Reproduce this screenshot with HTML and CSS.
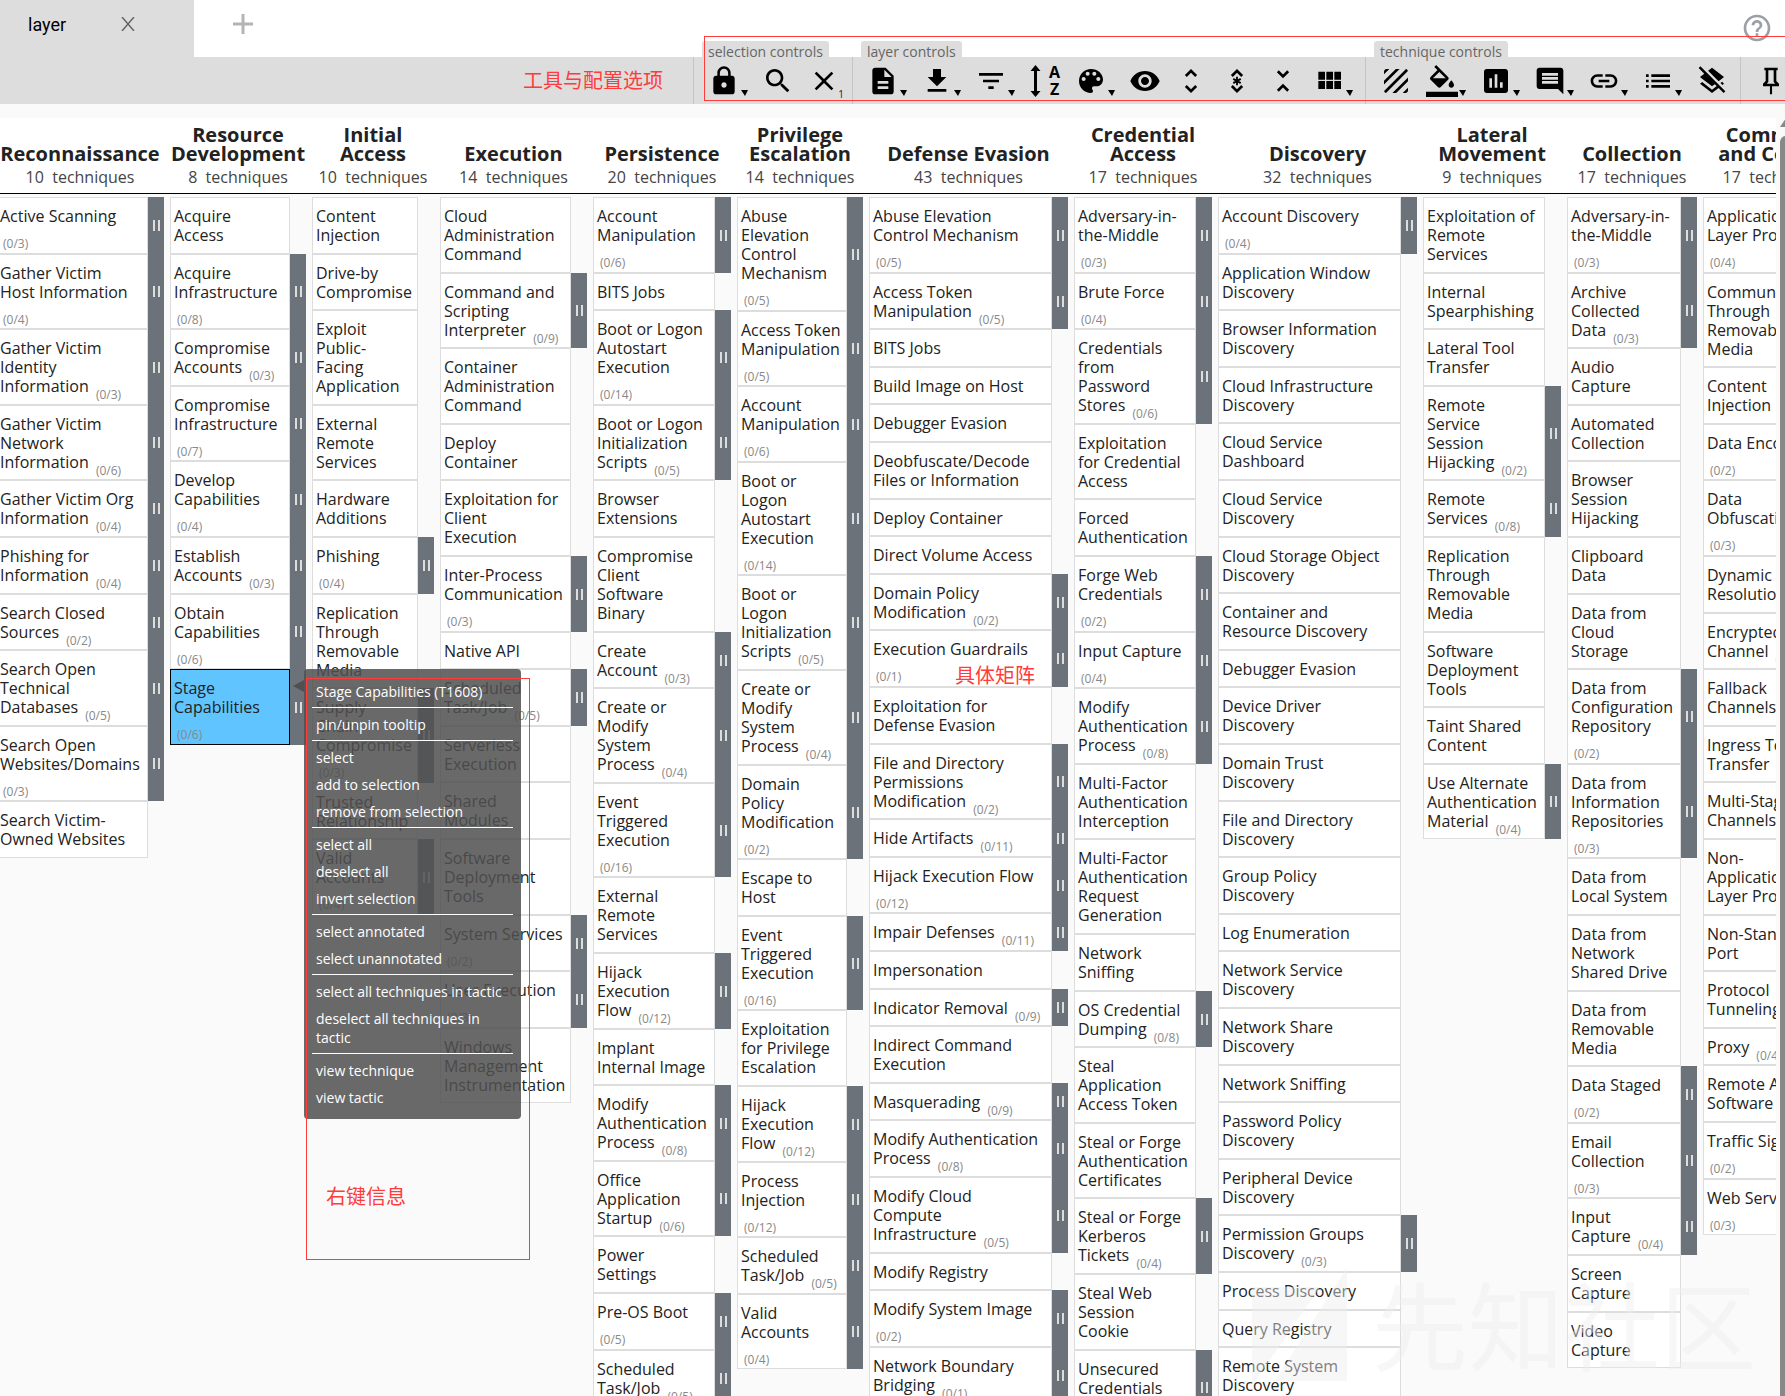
FILE: index.html
```html
<!DOCTYPE html>
<html lang="en">
<head>
<meta charset="utf-8">
<title>layer</title>
<link rel="stylesheet" href="styles.css">
</head>
<body>
<nav class="tabs">
  <div class="tab"><a href="#">layer</a><button class="tab-close" aria-label="Close tab"><svg width="14" height="14" viewBox="0 0 14 14"><path d="M1 0l12 14M13 0L1 14" stroke="#666" stroke-width="1.5" fill="none"/></svg></button></div>
  <button class="tab-add" aria-label="New tab"><svg width="20" height="20" viewBox="0 0 20 20"><path d="M10 0v20M0 10h20" stroke="#b4b4b4" stroke-width="3" fill="none"/></svg></button>
  <button class="help" aria-label="Help"><svg viewBox="0 0 24 24"><path d="M11 18h2v-2h-2v2zm1-16C6.48 2 2 6.48 2 12s4.48 10 10 10 10-4.48 10-10S17.52 2 12 2zm0 18c-4.41 0-8-3.59-8-8s3.59-8 8-8 8 3.59 8 8-3.59 8-8 8zm0-14c-2.21 0-4 1.79-4 4h2c0-1.1.9-2 2-2s2 .9 2 2c0 2-3 1.75-3 5h2c0-2.25 3-2.5 3-5 0-2.21-1.79-4-4-4z"/></svg></button>
</nav>
<div class="toolbar">
  <span class="toolbar-note">工具与配置选项</span>
  <div class="group">
    <span class="label">selection controls</span>
    <button class="menu" aria-label="Lock"><svg viewBox="0 0 24 24"><path d="M18 8h-1V6c0-2.76-2.24-5-5-5S7 3.24 7 6v2H6c-1.1 0-2 .9-2 2v10c0 1.1.9 2 2 2h12c1.1 0 2-.9 2-2V10c0-1.1-.9-2-2-2zm-6 9c-1.1 0-2-.9-2-2s.9-2 2-2 2 .9 2 2-.9 2-2 2zm3.1-9H8.9V6c0-1.71 1.39-3.1 3.1-3.1 1.71 0 3.1 1.39 3.1 3.1v2z"/></svg></button>
    <button aria-label="Search"><svg viewBox="0 0 24 24"><path d="M15.5 14h-.79l-.28-.27C15.41 12.59 16 11.11 16 9.5 16 5.91 13.09 3 9.5 3S3 5.91 3 9.5 5.91 16 9.5 16c1.61 0 3.09-.59 4.23-1.57l.27.28v.79l5 4.99L20.49 19l-4.99-5zm-6 0C7.01 14 5 11.99 5 9.5S7.01 5 9.5 5 14 7.01 14 9.5 11.99 14 9.5 14z"/></svg></button>
    <button aria-label="Deselect"><svg viewBox="0 0 24 24"><path d="M19 6.41L17.59 5 12 10.59 6.41 5 5 6.41 10.59 12 5 17.59 6.41 19 12 13.41 17.59 19 19 17.59 13.41 12z"/></svg><span class="badge">1</span></button>
  </div>
  <div class="group">
    <span class="label">layer controls</span>
    <button class="menu" aria-label="Layer information"><svg viewBox="0 0 24 24"><path d="M14 2H6c-1.1 0-1.99.9-1.99 2L4 20c0 1.1.89 2 1.99 2H18c1.1 0 2-.9 2-2V8l-6-6zm2 16H8v-2h8v2zm0-4H8v-2h8v2zm-3-5V3.5L18.5 9H13z"/></svg></button>
    <button class="menu" aria-label="Export"><svg viewBox="0 0 24 24"><path d="M19 9h-4V3H9v6H5l7 7 7-7zM5 18v2h14v-2H5z"/></svg></button>
    <button class="menu" aria-label="Filters"><svg viewBox="0 0 24 24"><path d="M10 18h4v-2h-4v2zM3 6v2h18V6H3zm3 7h12v-2H6v2z"/></svg></button>
    <button aria-label="Sorting"><svg viewBox="0 0 32 32"><path d="M6.500 0l5 6H8v20h3.500l-5 6-5-6H5V6H1.500z"/><text x="20" y="13" font-size="16">A</text><text x="21" y="30" font-size="16">Z</text></svg></button>
    <button class="menu" aria-label="Color setup"><svg viewBox="0 0 24 24"><path d="M12 3c-4.970 0-9 4.030-9 9s4.030 9 9 9c.83 0 1.500-.67 1.500-1.500 0-.39-.15-.74-.39-1.010-.23-.26-.38-.61-.38-.99 0-.83.67-1.500 1.500-1.500H16c2.760 0 5-2.240 5-5 0-4.420-4.030-8-9-8zm-5.500 9c-.83 0-1.500-.67-1.500-1.500S5.670 9 6.500 9 8 9.670 8 10.500 7.330 12 6.500 12zm3-4C8.670 8 8 7.330 8 6.500S8.670 5 9.500 5s1.500.67 1.500 1.500S10.330 8 9.500 8zm5 0c-.83 0-1.500-.67-1.500-1.500S13.670 5 14.500 5s1.500.67 1.500 1.500S15.330 8 14.500 8zm3 4c-.83 0-1.500-.67-1.500-1.500S16.670 9 17.500 9s1.500.67 1.500 1.500-.67 1.500-1.500 1.500z"/></svg></button>
    <button aria-label="Show or hide disabled"><svg viewBox="0 0 24 24"><path d="M12 4.500C7 4.500 2.730 7.610 1 12c1.730 4.390 6 7.500 11 7.500s9.270-3.110 11-7.500c-1.730-4.390-6-7.500-11-7.500zM12 17c-2.760 0-5-2.240-5-5s2.240-5 5-5 5 2.240 5 5-2.240 5-5 5zm0-8c-1.660 0-3 1.340-3 3s1.340 3 3 3 3-1.340 3-3-1.340-3-3-3z"/></svg></button>
    <button aria-label="Expand sub-techniques"><svg viewBox="0 0 24 24"><path d="M12 5.830L15.170 9l1.410-1.410L12 3 7.410 7.590 8.830 9 12 5.830zm0 12.340L8.830 15l-1.410 1.410L12 21l4.590-4.590L15.170 15 12 18.170z"/></svg></button>
    <button aria-label="Expand annotated sub-techniques"><svg viewBox="0 0 24 24"><path d="M12 5.830L15.170 9l1.410-1.410L12 3 7.410 7.590 8.830 9 12 5.830zm0 12.340L8.830 15l-1.410 1.410L12 21l4.590-4.590L15.170 15 12 18.170z"/><path d="M12 8.800v6.400M9.200 10.400l5.600 3.200M14.800 10.400l-5.600 3.200" stroke="#000" stroke-width="1.400"/></svg></button>
    <button aria-label="Collapse sub-techniques"><svg viewBox="0 0 24 24"><path d="M7.410 18.590L8.830 20 12 16.830 15.170 20l1.410-1.410L12 14l-4.590 4.590zm9.180-13.180L15.170 4 12 7.170 8.830 4 7.410 5.410 12 10l4.590-4.590z"/></svg></button>
    <button class="menu" aria-label="Matrix configuration"><svg viewBox="0 0 24 24"><path d="M4 11h5V5H4v6zm0 7h5v-6H4v6zm6 0h5v-6h-5v6zm6 0h5v-6h-5v6zm-6-7h5V5h-5v6zm6-6v6h5V5h-5z"/></svg></button>
  </div>
  <div class="group">
    <span class="label">technique controls</span>
    <button aria-label="Toggle state"><svg viewBox="0 0 24 24"><path d="M19.510 3.080L3.080 19.510c.09.34.27.65.51.9.25.24.56.42.9.51L20.930 4.490c-.19-.69-.73-1.230-1.420-1.410zM11.880 3L3 11.880v2.830L14.710 3h-2.830zM5 3c-1.100 0-2 .9-2 2v2l4-4H5zm14 18c.55 0 1.050-.22 1.410-.59.37-.36.59-.86.59-1.410v-2l-4 4h2zm-9.710 0h2.830L21 12.120V9.290L9.290 21z"/></svg></button>
    <button class="menu" aria-label="Background color"><svg viewBox="0 0 24 24"><path d="M16.560 8.940L7.620 0 6.210 1.410l2.380 2.380-5.150 5.150c-.59.59-.59 1.540 0 2.120l5.500 5.500c.29.29.68.44 1.060.44s.77-.15 1.060-.44l5.500-5.500c.59-.58.59-1.530 0-2.120zM5.210 10L10 5.210 14.790 10H5.210zM19 11.500s-2 2.170-2 3.500c0 1.100.9 2 2 2s2-.9 2-2c0-1.330-2-3.500-2-3.500zM0 20h24v4H0z"/></svg></button>
    <button class="menu" aria-label="Scoring"><svg viewBox="0 0 24 24"><path d="M19 3H5c-1.100 0-2 .9-2 2v14c0 1.100.9 2 2 2h14c1.100 0 2-.9 2-2V5c0-1.100-.9-2-2-2zM9 17H7v-7h2v7zm4 0h-2V7h2v10zm4 0h-2v-4h2v4z"/></svg></button>
    <button class="menu" aria-label="Comment"><svg viewBox="0 0 24 24"><path d="M21.990 4c0-1.100-.89-2-1.990-2H4c-1.100 0-2 .9-2 2v12c0 1.100.9 2 2 2h14l4 4-.01-18zM18 14H6v-2h12v2zm0-3H6V9h12v2zm0-3H6V6h12v2z"/></svg></button>
    <button class="menu" aria-label="Link"><svg viewBox="0 0 24 24"><path d="M3.900 12c0-1.710 1.390-3.100 3.100-3.100h4V7H7c-2.760 0-5 2.240-5 5s2.240 5 5 5h4v-1.900H7c-1.710 0-3.100-1.390-3.100-3.100zM8 13h8v-2H8v2zm9-6h-4v1.900h4c1.710 0 3.100 1.390 3.100 3.100s-1.390 3.100-3.100 3.100h-4V17h4c2.760 0 5-2.240 5-5s-2.240-5-5-5z"/></svg></button>
    <button class="menu" aria-label="Metadata"><svg viewBox="0 0 24 24"><path d="M3 13h2v-2H3v2zm0 4h2v-2H3v2zm0-8h2V7H3v2zm4 4h14v-2H7v2zm0 4h14v-2H7v2zM7 7v2h14V7H7z"/></svg></button>
    <button aria-label="Clear annotations"><svg viewBox="0 0 24 24"><path d="M19.810 14.990l1.190-.92-1.430-1.430-1.190.92 1.430 1.430zm-.45-4.720L21 9l-9-7-2.910 2.270 7.870 7.880 2.400-1.880zM3.270 1L2 2.270l4.220 4.220L3 9l1.630 1.270L12 16l2.100-1.630 1.430 1.430L12 18.540l-7.370-5.730L3 14.070l9 7 4.950-3.850L20.730 21 22 19.730 3.270 1z"/></svg></button>
  </div>
  <div class="group group-last">
    <button aria-label="Pin toolbar"><svg viewBox="0 0 24 24"><path d="M16 12V4h1V2H7v2h1v8l-2 2v2h5.200v6h1.600v-6H18v-2l-2-2M8.800 14l1.200-1.200V4h4v8.800l1.200 1.200H8.800z"/></svg></button>
  </div>
  <div class="mark mark-toolbar"></div>
</div>
<main class="pane">
<div class="view">
<div class="tactics columns">
  <div><h2>Reconnaissance</h2><p>10&nbsp; techniques</p></div>
  <div><h2>Resource<br>Development</h2><p>8&nbsp; techniques</p></div>
  <div><h2>Initial<br>Access</h2><p>10&nbsp; techniques</p></div>
  <div><h2>Execution</h2><p>14&nbsp; techniques</p></div>
  <div><h2>Persistence</h2><p>20&nbsp; techniques</p></div>
  <div><h2>Privilege<br>Escalation</h2><p>14&nbsp; techniques</p></div>
  <div><h2>Defense Evasion</h2><p>43&nbsp; techniques</p></div>
  <div><h2>Credential<br>Access</h2><p>17&nbsp; techniques</p></div>
  <div><h2>Discovery</h2><p>32&nbsp; techniques</p></div>
  <div><h2>Lateral<br>Movement</h2><p>9&nbsp; techniques</p></div>
  <div><h2>Collection</h2><p>17&nbsp; techniques</p></div>
  <div><h2>Command<br>and Control</h2><p>17&nbsp; techniques</p></div>
</div>
<div class="matrix columns">
<ul>
<li><a href="#">Active Scanning<br><small>(0/3)</small></a><button aria-label="Expand"></button></li>
<li><a href="#">Gather Victim<br>Host Information<br><small>(0/4)</small></a><button aria-label="Expand"></button></li>
<li><a href="#">Gather Victim<br>Identity<br>Information <small>(0/3)</small></a><button aria-label="Expand"></button></li>
<li><a href="#">Gather Victim<br>Network<br>Information <small>(0/6)</small></a><button aria-label="Expand"></button></li>
<li><a href="#">Gather Victim Org<br>Information <small>(0/4)</small></a><button aria-label="Expand"></button></li>
<li><a href="#">Phishing for<br>Information <small>(0/4)</small></a><button aria-label="Expand"></button></li>
<li><a href="#">Search Closed<br>Sources <small>(0/2)</small></a><button aria-label="Expand"></button></li>
<li><a href="#">Search Open<br>Technical<br>Databases <small>(0/5)</small></a><button aria-label="Expand"></button></li>
<li><a href="#">Search Open<br>Websites/Domains<br><small>(0/3)</small></a><button aria-label="Expand"></button></li>
<li><a href="#">Search Victim-<br>Owned Websites</a></li>
</ul>
<ul>
<li><a href="#">Acquire<br>Access</a></li>
<li><a href="#">Acquire<br>Infrastructure<br><small>(0/8)</small></a><button aria-label="Expand"></button></li>
<li><a href="#">Compromise<br>Accounts <small>(0/3)</small></a><button aria-label="Expand"></button></li>
<li><a href="#">Compromise<br>Infrastructure<br><small>(0/7)</small></a><button aria-label="Expand"></button></li>
<li><a href="#">Develop<br>Capabilities<br><small>(0/4)</small></a><button aria-label="Expand"></button></li>
<li><a href="#">Establish<br>Accounts <small>(0/3)</small></a><button aria-label="Expand"></button></li>
<li><a href="#">Obtain<br>Capabilities<br><small>(0/6)</small></a><button aria-label="Expand"></button></li>
<li class="selected"><a href="#">Stage<br>Capabilities<br><small>(0/6)</small></a><button aria-label="Expand"></button>
  <div class="context">
    <button>Stage Capabilities (T1608)</button>
    <hr>
    <button>pin/unpin tooltip</button>
    <hr>
    <button>select</button>
    <button>add to selection</button>
    <button>remove from selection</button>
    <hr>
    <button>select all</button>
    <button>deselect all</button>
    <button>invert selection</button>
    <hr>
    <button>select annotated</button>
    <button>select unannotated</button>
    <hr>
    <button>select all techniques in tactic</button>
    <button>deselect all techniques in<br>tactic</button>
    <hr>
    <button>view technique</button>
    <button>view tactic</button>
  </div>
</li>
</ul>
<ul>
<li><a href="#">Content<br>Injection</a></li>
<li><a href="#">Drive-by<br>Compromise</a></li>
<li><a href="#">Exploit<br>Public-<br>Facing<br>Application</a></li>
<li><a href="#">External<br>Remote<br>Services</a></li>
<li><a href="#">Hardware<br>Additions</a></li>
<li><a href="#">Phishing<br><small>(0/4)</small></a><button aria-label="Expand"></button></li>
<li><a href="#">Replication<br>Through<br>Removable<br>Media</a></li>
<li><a href="#">Supply<br>Chain<br>Compromise<br><small>(0/3)</small></a><button aria-label="Expand"></button></li>
<li><a href="#">Trusted<br>Relationship</a></li>
<li><a href="#">Valid<br>Accounts<br><small>(0/4)</small></a><button aria-label="Expand"></button></li>
</ul>
<ul>
<li><a href="#">Cloud<br>Administration<br>Command</a></li>
<li><a href="#">Command and<br>Scripting<br>Interpreter <small>(0/9)</small></a><button aria-label="Expand"></button></li>
<li><a href="#">Container<br>Administration<br>Command</a></li>
<li><a href="#">Deploy<br>Container</a></li>
<li><a href="#">Exploitation for<br>Client<br>Execution</a></li>
<li><a href="#">Inter-Process<br>Communication<br><small>(0/3)</small></a><button aria-label="Expand"></button></li>
<li><a href="#">Native API</a></li>
<li><a href="#">Scheduled<br>Task/Job <small>(0/5)</small></a><button aria-label="Expand"></button></li>
<li><a href="#">Serverless<br>Execution</a></li>
<li><a href="#">Shared<br>Modules</a></li>
<li><a href="#">Software<br>Deployment<br>Tools</a></li>
<li><a href="#">System Services<br><small>(0/2)</small></a><button aria-label="Expand"></button></li>
<li><a href="#">User Execution<br><small>(0/3)</small></a><button aria-label="Expand"></button></li>
<li><a href="#">Windows<br>Management<br>Instrumentation</a></li>
</ul>
<ul>
<li><a href="#">Account<br>Manipulation<br><small>(0/6)</small></a><button aria-label="Expand"></button></li>
<li><a href="#">BITS Jobs</a></li>
<li><a href="#">Boot or Logon<br>Autostart<br>Execution<br><small>(0/14)</small></a><button aria-label="Expand"></button></li>
<li><a href="#">Boot or Logon<br>Initialization<br>Scripts <small>(0/5)</small></a><button aria-label="Expand"></button></li>
<li><a href="#">Browser<br>Extensions</a></li>
<li><a href="#">Compromise<br>Client<br>Software<br>Binary</a></li>
<li><a href="#">Create<br>Account <small>(0/3)</small></a><button aria-label="Expand"></button></li>
<li><a href="#">Create or<br>Modify<br>System<br>Process <small>(0/4)</small></a><button aria-label="Expand"></button></li>
<li><a href="#">Event<br>Triggered<br>Execution<br><small>(0/16)</small></a><button aria-label="Expand"></button></li>
<li><a href="#">External<br>Remote<br>Services</a></li>
<li><a href="#">Hijack<br>Execution<br>Flow <small>(0/12)</small></a><button aria-label="Expand"></button></li>
<li><a href="#">Implant<br>Internal Image</a></li>
<li><a href="#">Modify<br>Authentication<br>Process <small>(0/8)</small></a><button aria-label="Expand"></button></li>
<li><a href="#">Office<br>Application<br>Startup <small>(0/6)</small></a><button aria-label="Expand"></button></li>
<li><a href="#">Power<br>Settings</a></li>
<li><a href="#">Pre-OS Boot<br><small>(0/5)</small></a><button aria-label="Expand"></button></li>
<li><a href="#">Scheduled<br>Task/Job <small>(0/5)</small></a><button aria-label="Expand"></button></li>
</ul>
<ul>
<li><a href="#">Abuse<br>Elevation<br>Control<br>Mechanism<br><small>(0/5)</small></a><button aria-label="Expand"></button></li>
<li><a href="#">Access Token<br>Manipulation<br><small>(0/5)</small></a><button aria-label="Expand"></button></li>
<li><a href="#">Account<br>Manipulation<br><small>(0/6)</small></a><button aria-label="Expand"></button></li>
<li><a href="#">Boot or<br>Logon<br>Autostart<br>Execution<br><small>(0/14)</small></a><button aria-label="Expand"></button></li>
<li><a href="#">Boot or<br>Logon<br>Initialization<br>Scripts <small>(0/5)</small></a><button aria-label="Expand"></button></li>
<li><a href="#">Create or<br>Modify<br>System<br>Process <small>(0/4)</small></a><button aria-label="Expand"></button></li>
<li><a href="#">Domain<br>Policy<br>Modification<br><small>(0/2)</small></a><button aria-label="Expand"></button></li>
<li><a href="#">Escape to<br>Host</a></li>
<li><a href="#">Event<br>Triggered<br>Execution<br><small>(0/16)</small></a><button aria-label="Expand"></button></li>
<li><a href="#">Exploitation<br>for Privilege<br>Escalation</a></li>
<li><a href="#">Hijack<br>Execution<br>Flow <small>(0/12)</small></a><button aria-label="Expand"></button></li>
<li><a href="#">Process<br>Injection<br><small>(0/12)</small></a><button aria-label="Expand"></button></li>
<li><a href="#">Scheduled<br>Task/Job <small>(0/5)</small></a><button aria-label="Expand"></button></li>
<li><a href="#">Valid<br>Accounts<br><small>(0/4)</small></a><button aria-label="Expand"></button></li>
</ul>
<ul>
<li><a href="#">Abuse Elevation<br>Control Mechanism<br><small>(0/5)</small></a><button aria-label="Expand"></button></li>
<li><a href="#">Access Token<br>Manipulation <small>(0/5)</small></a><button aria-label="Expand"></button></li>
<li><a href="#">BITS Jobs</a></li>
<li><a href="#">Build Image on Host</a></li>
<li><a href="#">Debugger Evasion</a></li>
<li><a href="#">Deobfuscate/Decode<br>Files or Information</a></li>
<li><a href="#">Deploy Container</a></li>
<li><a href="#">Direct Volume Access</a></li>
<li><a href="#">Domain Policy<br>Modification <small>(0/2)</small></a><button aria-label="Expand"></button></li>
<li><a href="#">Execution Guardrails<br><small>(0/1)</small></a><button aria-label="Expand"></button></li>
<li><a href="#">Exploitation for<br>Defense Evasion</a></li>
<li><a href="#">File and Directory<br>Permissions<br>Modification <small>(0/2)</small></a><button aria-label="Expand"></button></li>
<li><a href="#">Hide Artifacts <small>(0/11)</small></a><button aria-label="Expand"></button></li>
<li><a href="#">Hijack Execution Flow<br><small>(0/12)</small></a><button aria-label="Expand"></button></li>
<li><a href="#">Impair Defenses <small>(0/11)</small></a><button aria-label="Expand"></button></li>
<li><a href="#">Impersonation</a></li>
<li><a href="#">Indicator Removal <small>(0/9)</small></a><button aria-label="Expand"></button></li>
<li><a href="#">Indirect Command<br>Execution</a></li>
<li><a href="#">Masquerading <small>(0/9)</small></a><button aria-label="Expand"></button></li>
<li><a href="#">Modify Authentication<br>Process <small>(0/8)</small></a><button aria-label="Expand"></button></li>
<li><a href="#">Modify Cloud<br>Compute<br>Infrastructure <small>(0/5)</small></a><button aria-label="Expand"></button></li>
<li><a href="#">Modify Registry</a></li>
<li><a href="#">Modify System Image<br><small>(0/2)</small></a><button aria-label="Expand"></button></li>
<li><a href="#">Network Boundary<br>Bridging <small>(0/1)</small></a><button aria-label="Expand"></button></li>
</ul>
<ul>
<li><a href="#">Adversary-in-<br>the-Middle<br><small>(0/3)</small></a><button aria-label="Expand"></button></li>
<li><a href="#">Brute Force<br><small>(0/4)</small></a><button aria-label="Expand"></button></li>
<li><a href="#">Credentials<br>from<br>Password<br>Stores <small>(0/6)</small></a><button aria-label="Expand"></button></li>
<li><a href="#">Exploitation<br>for Credential<br>Access</a></li>
<li><a href="#">Forced<br>Authentication</a></li>
<li><a href="#">Forge Web<br>Credentials<br><small>(0/2)</small></a><button aria-label="Expand"></button></li>
<li><a href="#">Input Capture<br><small>(0/4)</small></a><button aria-label="Expand"></button></li>
<li><a href="#">Modify<br>Authentication<br>Process <small>(0/8)</small></a><button aria-label="Expand"></button></li>
<li><a href="#">Multi-Factor<br>Authentication<br>Interception</a></li>
<li><a href="#">Multi-Factor<br>Authentication<br>Request<br>Generation</a></li>
<li><a href="#">Network<br>Sniffing</a></li>
<li><a href="#">OS Credential<br>Dumping <small>(0/8)</small></a><button aria-label="Expand"></button></li>
<li><a href="#">Steal<br>Application<br>Access Token</a></li>
<li><a href="#">Steal or Forge<br>Authentication<br>Certificates</a></li>
<li><a href="#">Steal or Forge<br>Kerberos<br>Tickets <small>(0/4)</small></a><button aria-label="Expand"></button></li>
<li><a href="#">Steal Web<br>Session<br>Cookie</a></li>
<li><a href="#">Unsecured<br>Credentials<br><small>(0/8)</small></a><button aria-label="Expand"></button></li>
</ul>
<ul>
<li><a href="#">Account Discovery<br><small>(0/4)</small></a><button aria-label="Expand"></button></li>
<li><a href="#">Application Window<br>Discovery</a></li>
<li><a href="#">Browser Information<br>Discovery</a></li>
<li><a href="#">Cloud Infrastructure<br>Discovery</a></li>
<li><a href="#">Cloud Service<br>Dashboard</a></li>
<li><a href="#">Cloud Service<br>Discovery</a></li>
<li><a href="#">Cloud Storage Object<br>Discovery</a></li>
<li><a href="#">Container and<br>Resource Discovery</a></li>
<li><a href="#">Debugger Evasion</a></li>
<li><a href="#">Device Driver<br>Discovery</a></li>
<li><a href="#">Domain Trust<br>Discovery</a></li>
<li><a href="#">File and Directory<br>Discovery</a></li>
<li><a href="#">Group Policy<br>Discovery</a></li>
<li><a href="#">Log Enumeration</a></li>
<li><a href="#">Network Service<br>Discovery</a></li>
<li><a href="#">Network Share<br>Discovery</a></li>
<li><a href="#">Network Sniffing</a></li>
<li><a href="#">Password Policy<br>Discovery</a></li>
<li><a href="#">Peripheral Device<br>Discovery</a></li>
<li><a href="#">Permission Groups<br>Discovery <small>(0/3)</small></a><button aria-label="Expand"></button></li>
<li><a href="#">Process Discovery</a></li>
<li><a href="#">Query Registry</a></li>
<li><a href="#">Remote System<br>Discovery</a></li>
</ul>
<ul>
<li><a href="#">Exploitation of<br>Remote<br>Services</a></li>
<li><a href="#">Internal<br>Spearphishing</a></li>
<li><a href="#">Lateral Tool<br>Transfer</a></li>
<li><a href="#">Remote<br>Service<br>Session<br>Hijacking <small>(0/2)</small></a><button aria-label="Expand"></button></li>
<li><a href="#">Remote<br>Services <small>(0/8)</small></a><button aria-label="Expand"></button></li>
<li><a href="#">Replication<br>Through<br>Removable<br>Media</a></li>
<li><a href="#">Software<br>Deployment<br>Tools</a></li>
<li><a href="#">Taint Shared<br>Content</a></li>
<li><a href="#">Use Alternate<br>Authentication<br>Material <small>(0/4)</small></a><button aria-label="Expand"></button></li>
</ul>
<ul>
<li><a href="#">Adversary-in-<br>the-Middle<br><small>(0/3)</small></a><button aria-label="Expand"></button></li>
<li><a href="#">Archive<br>Collected<br>Data <small>(0/3)</small></a><button aria-label="Expand"></button></li>
<li><a href="#">Audio<br>Capture</a></li>
<li><a href="#">Automated<br>Collection</a></li>
<li><a href="#">Browser<br>Session<br>Hijacking</a></li>
<li><a href="#">Clipboard<br>Data</a></li>
<li><a href="#">Data from<br>Cloud<br>Storage</a></li>
<li><a href="#">Data from<br>Configuration<br>Repository<br><small>(0/2)</small></a><button aria-label="Expand"></button></li>
<li><a href="#">Data from<br>Information<br>Repositories<br><small>(0/3)</small></a><button aria-label="Expand"></button></li>
<li><a href="#">Data from<br>Local System</a></li>
<li><a href="#">Data from<br>Network<br>Shared Drive</a></li>
<li><a href="#">Data from<br>Removable<br>Media</a></li>
<li><a href="#">Data Staged<br><small>(0/2)</small></a><button aria-label="Expand"></button></li>
<li><a href="#">Email<br>Collection<br><small>(0/3)</small></a><button aria-label="Expand"></button></li>
<li><a href="#">Input<br>Capture <small>(0/4)</small></a><button aria-label="Expand"></button></li>
<li><a href="#">Screen<br>Capture</a></li>
<li><a href="#">Video<br>Capture</a></li>
</ul>
<ul>
<li><a href="#">Application<br>Layer Protocol<br><small>(0/4)</small></a><button aria-label="Expand"></button></li>
<li><a href="#">Communication<br>Through<br>Removable<br>Media</a></li>
<li><a href="#">Content<br>Injection</a></li>
<li><a href="#">Data Encoding<br><small>(0/2)</small></a><button aria-label="Expand"></button></li>
<li><a href="#">Data<br>Obfuscation<br><small>(0/3)</small></a><button aria-label="Expand"></button></li>
<li><a href="#">Dynamic<br>Resolution <small>(0/3)</small></a><button aria-label="Expand"></button></li>
<li><a href="#">Encrypted<br>Channel <small>(0/2)</small></a><button aria-label="Expand"></button></li>
<li><a href="#">Fallback<br>Channels</a></li>
<li><a href="#">Ingress Tool<br>Transfer</a></li>
<li><a href="#">Multi-Stage<br>Channels</a></li>
<li><a href="#">Non-<br>Application<br>Layer Protocol</a></li>
<li><a href="#">Non-Standard<br>Port</a></li>
<li><a href="#">Protocol<br>Tunneling</a></li>
<li><a href="#">Proxy <small>(0/4)</small></a><button aria-label="Expand"></button></li>
<li><a href="#">Remote Access<br>Software</a></li>
<li><a href="#">Traffic Signaling<br><small>(0/2)</small></a><button aria-label="Expand"></button></li>
<li><a href="#">Web Service<br><small>(0/3)</small></a><button aria-label="Expand"></button></li>
</ul>
</div>
</div>
<div class="scrollbar"><div class="scroll-arrow"></div><div class="scroll-thumb"></div></div>
</main>
<div class="mark mark-context"></div>
<span class="note note-matrix">具体矩阵</span>
<span class="note note-context">右键信息</span>
<div class="watermark"><svg width="110" height="120" viewBox="0 0 110 120"><path d="M2 21h68L2 120zM97 2v113H25z"/></svg><span>先知社区</span></div>
</body>
</html>
```
FILE: styles.css
```css
*, *::before, *::after { box-sizing: border-box; }
body {
  margin: 0;
  height: 100vh;
  display: flex;
  flex-direction: column;
  position: relative;
  overflow: hidden;
  background: #fafafa;
  color: #222;
  font: 16px/19px "Open Sans", "Noto Sans CJK SC", sans-serif;
}
button {
  margin: 0;
  padding: 0;
  border: 0;
  background: none;
  color: inherit;
  font: inherit;
}
a { color: inherit; text-decoration: none; }
h2, p, ul { margin: 0; padding: 0; }
svg { display: block; }

/* layer tabs */
.tabs {
  flex: none;
  display: flex;
  align-items: stretch;
  height: 57px;
  background: #fff;
}
.tab {
  display: flex;
  justify-content: space-between;
  width: 194px;
  padding: 15px 59px 0 28px;
  background: #ddd;
  color: #000;
  font: 18px/19px Roboto, sans-serif;
}
.tab-close, .tab-add { align-self: flex-start; }
.tab-close { padding-top: 2px; }
.tab-add { margin: 14px 0 0 39px; }
.help { margin: 0 12px 0 auto; align-self: flex-start; padding-top: 12px; }
.help svg { width: 32px; height: 32px; fill: #9aa0a6; }

/* toolbar */
.toolbar {
  flex: none;
  position: relative;
  display: flex;
  justify-content: flex-end;
  height: 47px;
  background: #ddd;
}
.toolbar-note {
  margin-right: 30px;
  color: #ff3b3b;
  font-size: 20px;
  line-height: 47px;
}
.group {
  position: relative;
  display: flex;
  padding: 0 5px 0 7px;
  border-left: 1px solid #c4c4c4;
}
.group-last { width: 45px; overflow: hidden; }
.group button {
  flex: none;
  position: relative;
  display: flex;
  align-items: center;
  padding: 0 7px;
}
.group svg { width: 32px; height: 32px; fill: #000; font-weight: 700; }
.group .menu::after {
  content: "";
  align-self: flex-end;
  margin: 0 0 8px 1px;
  border: solid transparent;
  border-width: 6px 3px 0 4px;
  border-top-color: #000;
}
.label {
  position: absolute;
  left: 8px;
  top: -16px;
  height: 16px;
  padding: 0 6px;
  border-radius: 3px 3px 0 0;
  background: #ddd;
  color: #666;
  font-size: 14px;
  line-height: 22px;
  white-space: nowrap;
}
.badge { position: absolute; right: 3px; bottom: 4px; font-size: 10px; line-height: 12px; }

/* matrix */
.pane { flex: 1; display: flex; min-height: 0; padding-top: 14px; }
.view { flex: 1; min-width: 0; overflow: hidden; }
.columns {
  display: grid;
  grid-template-columns: 168px 136px 122px 147px 138px 126px 199px 138px 199px 138px 130px 148px;
  column-gap: 6px;
  width: max-content;
  margin-left: -4px;
}
.tactics {
  align-items: end;
  padding: 7px 0 6px;
  border-bottom: 1px solid #000;
  background: #fff;
  text-align: center;
  white-space: nowrap;
}
.tactics > div { display: flex; flex-direction: column; align-items: center; gap: 5px; }
.tactics h2 { font-size: 20px; line-height: 19px; }
.tactics p { color: #444; }
.matrix { align-items: start; padding-top: 3px; }
.matrix li {
  position: relative;
  display: grid;
  grid-template-columns: 1fr 16px;
  white-space: nowrap;
}
.matrix li > a {
  padding: 9px 0 8px 3px;
  border: 1px solid #ddd;
  background: #fff;
}
.matrix li:nth-child(5n+2) > a,
.matrix li:nth-child(5n+4) > a { padding-bottom: 7px; }
.matrix li.selected > a { border-color: #000; background: #60c4ff; }
.matrix li > button {
  display: flex;
  align-items: center;
  justify-content: center;
  padding-left: 1px;
  background: #6b727a;
}
.matrix li > button::before {
  content: "";
  width: 7px;
  height: 11px;
  border: solid #ddd;
  border-width: 0 2px;
}
.matrix small {
  padding-left: 3px;
  color: #888;
  font-size: 12px;
  line-height: 0;
  vertical-align: -7px;
}

/* context menu */
.context {
  position: absolute;
  z-index: 2;
  left: 134px;
  top: 0;
  display: flex;
  flex-direction: column;
  width: 217px;
  padding: 9px 8px 8px;
  border-radius: 4px;
  background: rgba(80, 80, 80, .86);
  color: #fff;
  font-size: 14px;
}
.context::before {
  content: "";
  position: absolute;
  left: -11px;
  top: 11px;
  border: solid transparent;
  border-width: 6px 11px 6px 0;
  border-right-color: #505050;
}
.context button { padding: 4px; text-align: left; }
.context hr { width: 100%; height: 1px; margin: 2px 0 3px; border: 0; background: #fff; }

/* scrollbar */
.scrollbar { flex: none; width: 9px; overflow: hidden; padding-left: 4px; }
.scroll-arrow { width: 12px; border: solid transparent; border-width: 0 6px 9px; border-bottom-color: #888; }
.scroll-thumb { width: 12px; height: 100%; margin-top: 9px; border-radius: 6px 6px 0 0; background: #888; }

/* annotations drawn over the page */
.mark { position: absolute; border: 1px solid #ff3b3b; pointer-events: none; }
.mark-toolbar { left: 704px; right: -1px; top: -21px; height: 65px; }
.mark-context { z-index: 3; left: 306px; top: 678px; width: 224px; height: 582px; }
.note { position: absolute; z-index: 3; color: #ff3b3b; font-size: 20px; line-height: 24px; }
.note-matrix { left: 955px; top: 664px; }
.note-context { left: 326px; top: 1185px; }
.watermark {
  position: absolute;
  right: 29px;
  bottom: 10px;
  display: flex;
  align-items: center;
  gap: 12px;
  opacity: .45;
  color: #eee;
  font-size: 96px;
  line-height: 120px;
  pointer-events: none;
}
.watermark svg { fill: #eee; }
```
